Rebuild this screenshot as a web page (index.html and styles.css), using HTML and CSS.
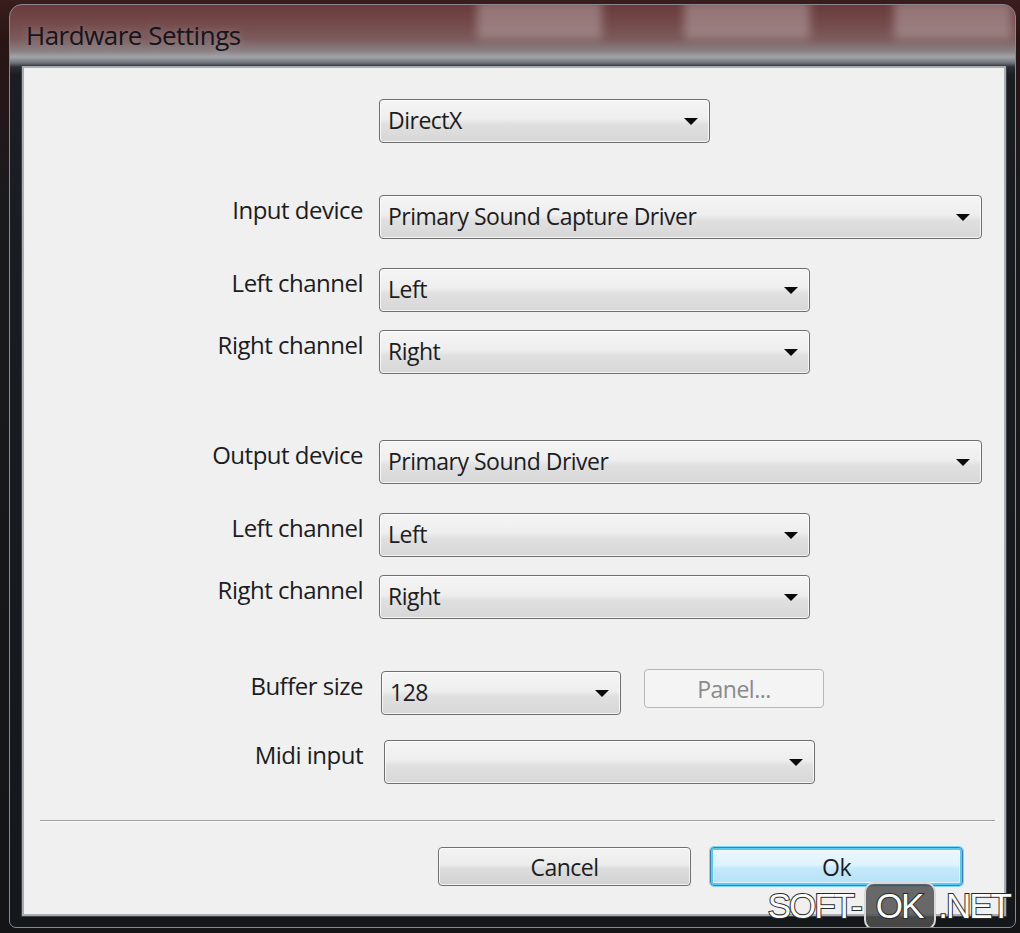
FILE: index.html
```html
<!DOCTYPE html>
<html>
<head>
<meta charset="utf-8">
<link rel="stylesheet" href="styles.css">
</head>
<body>
<div class="window">
  <div class="titlebar">
    <div class="glass g1"></div>
    <div class="glass g2"></div>
    <div class="glass g3"></div>
    <span class="title">Hardware Settings</span>
  </div>
  <div class="client">
    <div class="form">
      <div class="row">
        <span class="label"></span>
        <div class="combo w-short"><span>DirectX</span><i class="arrow"></i></div>
      </div>
      <div class="row gap-group">
        <span class="label">Input device</span>
        <div class="combo w-long"><span>Primary Sound Capture Driver</span><i class="arrow"></i></div>
      </div>
      <div class="row gap-sub">
        <span class="label">Left channel</span>
        <div class="combo w-mid"><span>Left</span><i class="arrow"></i></div>
      </div>
      <div class="row gap-tight">
        <span class="label">Right channel</span>
        <div class="combo w-mid"><span>Right</span><i class="arrow"></i></div>
      </div>
      <div class="row gap-section">
        <span class="label">Output device</span>
        <div class="combo w-long"><span>Primary Sound Driver</span><i class="arrow"></i></div>
      </div>
      <div class="row gap-sub">
        <span class="label">Left channel</span>
        <div class="combo w-mid"><span>Left</span><i class="arrow"></i></div>
      </div>
      <div class="row gap-tight">
        <span class="label">Right channel</span>
        <div class="combo w-mid"><span>Right</span><i class="arrow"></i></div>
      </div>
      <div class="row gap-buffer">
        <span class="label">Buffer size</span>
        <div class="inline">
          <div class="combo w-buffer"><span>128</span><i class="arrow"></i></div>
          <button class="btn btn-disabled">Panel...</button>
        </div>
      </div>
      <div class="row gap-midi">
        <span class="label">Midi input</span>
        <div class="combo w-midi"><span></span><i class="arrow"></i></div>
      </div>
    </div>
    <div class="sep"></div>
    <div class="buttons">
      <button class="btn btn-dialog">Cancel</button>
      <button class="btn btn-dialog btn-default">Ok</button>
    </div>
  </div>
  <div class="watermark"><span class="wm-text">SOFT-</span><span class="wm-box"><span class="wm-text">OK</span></span><span class="wm-text">.NET</span></div>
</div>
</body>
</html>
```
FILE: styles.css
```css
html, body {
  margin: 0;
  padding: 0;
}
body {
  width: 1020px;
  height: 933px;
  overflow: hidden;
  background: linear-gradient(to bottom, #3a1d1d 0, #2a1515 40px, #1a1a1c 200px, #141416 100%);
  font-family: "Open Sans", "Noto Sans", sans-serif;
}
.window {
  position: relative;
  box-sizing: border-box;
  margin: 4px 0 0 9px;
  width: 1007px;
  height: 924px;
  border: 1px solid #8a8a8e;
  border-radius: 13px 13px 7px 7px;
  background: linear-gradient(to bottom,
    #6b3b3c 0,
    #744a4b 18px,
    #7b5b5c 34px,
    #8a8083 46px,
    #a2a4a9 52px,
    #6d7178 58px,
    #2c3035 62px,
    #1a1d21 70px,
    #15181b 100%);
  padding: 0 9px 11px 12px;
  display: flex;
  flex-direction: column;
  overflow: hidden;
}
.titlebar {
  position: relative;
  height: 61px;
  flex: none;
}
.glass {
  position: absolute;
  top: -4px;
  height: 38px;
  background: rgba(190, 172, 174, 0.5);
  filter: blur(5px);
}
.g1 { left: 455px; width: 125px; }
.g2 { left: 662px; width: 126px; }
.g3 { left: 872px; width: 118px; }
.title {
  position: relative;
  display: block;
  padding: 13px 0 0 4px;
  font-size: 26px;
  line-height: 34px;
  letter-spacing: -0.5px;
  color: #15151c;
  text-shadow: 0 0 8px rgba(255, 255, 255, 0.25);
}
.client {
  box-sizing: border-box;
  width: 984px;
  height: 850px;
  flex: none;
  background: #f0f0f0;
  border: 2px solid #a9adb2;
  box-shadow: 0 0 0 1px #3c4046;
  display: flex;
  flex-direction: column;
}
.form {
  padding-top: 31px;
  display: flex;
  flex-direction: column;
}
.row {
  display: grid;
  grid-template-columns: 339px auto;
  column-gap: 16px;
  align-items: start;
}
.gap-group { margin-top: 52px; }
.gap-sub { margin-top: 29px; }
.gap-tight { margin-top: 18px; }
.gap-section { margin-top: 66px; }
.gap-buffer { margin-top: 52px; }
.gap-midi { margin-top: 25px; }
.label {
  text-align: right;
  font-size: 24px;
  line-height: 30px;
  letter-spacing: -0.5px;
  color: #1c1c22;
}
.combo {
  box-sizing: border-box;
  height: 44px;
  border: 1px solid #6f6f6f;
  border-radius: 4px;
  background: linear-gradient(to bottom, #f5f5f5 0, #eeeeee 45%, #e0e0e0 58%, #d7d7d7 100%);
  box-shadow: inset 0 0 0 1px rgba(255, 255, 255, 0.75);
  display: flex;
  align-items: center;
  justify-content: space-between;
  padding: 0 11px 0 8px;
  font-size: 23px;
  letter-spacing: -0.5px;
  color: #1c1c22;
}
.combo span {
  line-height: 30px;
  margin-top: -2px;
}
.arrow {
  width: 0;
  height: 0;
  border-left: 7px solid transparent;
  border-right: 7px solid transparent;
  border-top: 7px solid #0a0a0a;
  margin-top: 1px;
}
.w-short { width: 331px; }
.w-long { width: 603px; }
.w-mid { width: 431px; }
.w-buffer { width: 240px; margin-left: 2px; }
.w-midi { width: 431px; margin-left: 5px; }
.inline {
  display: flex;
  align-items: flex-start;
}
.btn {
  box-sizing: border-box;
  font-family: "Open Sans", "Noto Sans", sans-serif;
  font-size: 23px;
  letter-spacing: -0.5px;
  border-radius: 4px;
  padding: 0;
  line-height: 30px;
}
.btn-disabled {
  width: 180px;
  height: 39px;
  margin: -2px 0 0 23px;
  border: 1px solid #b4b8bb;
  background: #f4f4f4;
  color: #8a8a8a;
}
.sep {
  margin: 36px 9px 0 16px;
  height: 1px;
  background: #a0a0a0;
  border-bottom: 1px solid #fbfbfb;
}
.buttons {
  margin-top: 25px;
  padding-right: 41px;
  display: flex;
  justify-content: flex-end;
  gap: 19px;
}
.btn-dialog {
  width: 253px;
  height: 39px;
  border: 1px solid #707070;
  background: linear-gradient(to bottom, #f3f3f3 0, #ececec 45%, #dddddd 55%, #d2d2d2 100%);
  box-shadow: inset 0 0 0 1px rgba(255, 255, 255, 0.7);
  color: #1c1c22;
}
.btn-default {
  border: 1px solid #3c7fb1;
  background: linear-gradient(to bottom, #eef8fe 0, #dff2fd 45%, #c6e8fb 55%, #b4e0f8 100%);
  box-shadow: 0 0 0 1px #7fd6f7, inset 0 0 0 2px #58c9f3, inset 0 0 0 3px rgba(255, 255, 255, 0.6);
}
.watermark {
  position: absolute;
  right: 5px;
  bottom: -3px;
  display: flex;
  align-items: center;
  font-family: "Liberation Sans", Arial, sans-serif;
  font-size: 35px;
  letter-spacing: -2px;
}
.wm-text {
  color: #ffffff;
  -webkit-text-stroke: 2px #2a2a2a;
  paint-order: stroke fill;
  line-height: 40px;
}
.wm-box {
  display: inline-block;
  margin: 0 2px 0 3px;
  padding: 2px 12px 2px 10px;
  border: 2px solid #d8d8d8;
  border-radius: 10px;
  background: rgba(80, 80, 80, 0.85);
}
```
